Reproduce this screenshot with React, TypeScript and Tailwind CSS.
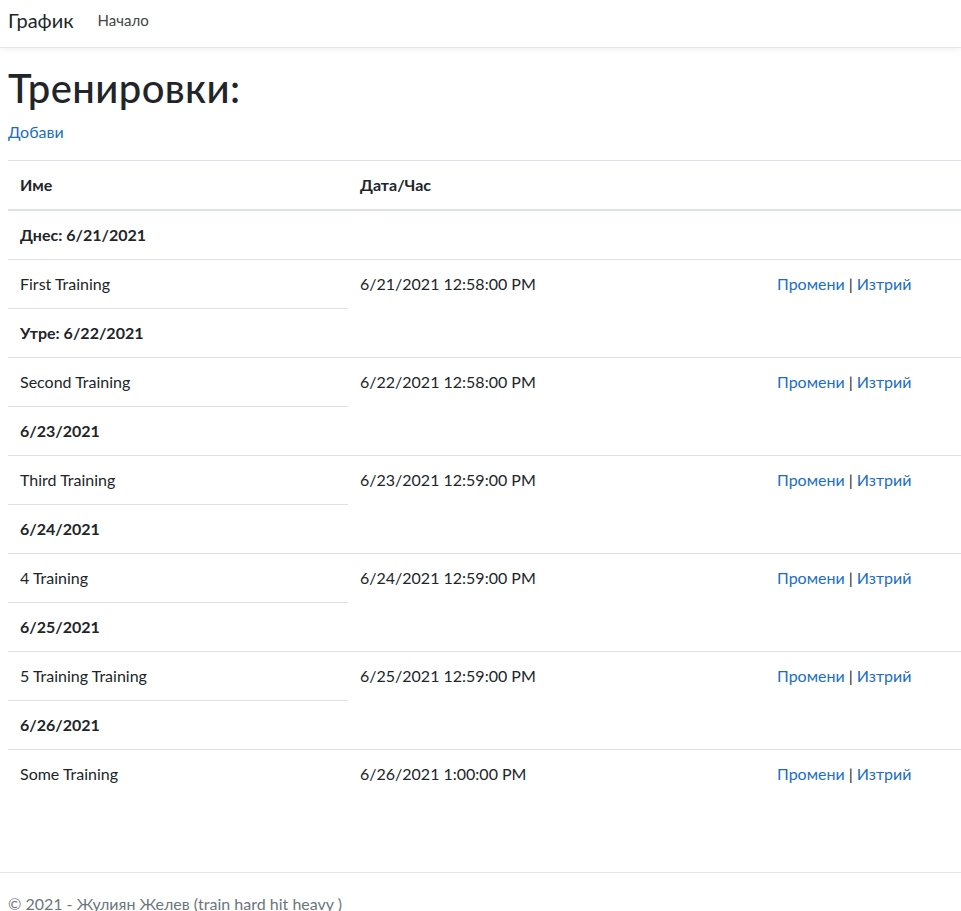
import React from "react";

type Training = { group: string; name: string; date: string };

const TRAININGS: Training[] = [
  { group: "Днес: 6/21/2021", name: "First Training", date: "6/21/2021 12:58:00 PM" },
  { group: "Утре: 6/22/2021", name: "Second Training", date: "6/22/2021 12:58:00 PM" },
  { group: "6/23/2021", name: "Third Training", date: "6/23/2021 12:59:00 PM" },
  { group: "6/24/2021", name: "4 Training", date: "6/24/2021 12:59:00 PM" },
  { group: "6/25/2021", name: "5 Training Training", date: "6/25/2021 12:59:00 PM" },
  { group: "6/26/2021", name: "Some Training", date: "6/26/2021 1:00:00 PM" },
];

const cell = "px-3 py-3 align-top border-t border-[#dee2e6]";

export default function App() {
  return (
    <div
      className="h-[911px] bg-white text-[#212529] text-base leading-6 overflow-hidden"
      style={{ fontFamily: "Lato, 'Noto Sans', sans-serif" }}
    >
      {/* Navbar */}
      <nav className="h-[48px] flex items-start gap-6 px-2 pt-[5px] border-b border-[#e5e5e5] shadow-[0_2px_6px_rgba(0,0,0,0.05)]">
        <span className="text-xl leading-[30px] text-[#212529]">График</span>
        <span className="text-[15px] leading-[30px] text-[#444]">Начало</span>
      </nav>

      {/* Main */}
      <main className="px-2 pt-4">
        <h1 className="text-[40px] font-medium leading-[48px] mb-2 tracking-[0.4px]">Тренировки:</h1>
        <p className="mb-4">
          <a className="text-[#1b6ec2]">Добави</a>
        </p>

        <table className="w-[953px] border-collapse">
          <colgroup>
            <col className="w-[340px]" />
            <col className="w-[417px]" />
            <col />
          </colgroup>
          <thead>
            <tr>
              <th className="px-3 py-3 text-left font-bold border-t border-b-2 border-[#dee2e6]">Име</th>
              <th className="px-3 py-3 text-left font-bold border-t border-b-2 border-[#dee2e6]">Дата/Час</th>
              <th className="px-3 py-3 border-t border-b-2 border-[#dee2e6]"></th>
            </tr>
          </thead>
          <tbody>
            <tr>
              <td colSpan={3} className={`${cell} font-bold`}>
                {TRAININGS[0].group}
              </td>
            </tr>
            {TRAININGS.map((t, i) => {
              const next = TRAININGS[i + 1];
              return (
                <React.Fragment key={t.name}>
                  <tr>
                    <td className={cell}>{t.name}</td>
                    <td rowSpan={next ? 2 : 1} className={cell}>
                      {t.date}
                    </td>
                    <td rowSpan={next ? 2 : 1} className={cell}>
                      <a className="text-[#1b6ec2]">Промени</a> |{" "}
                      <a className="text-[#1b6ec2]">Изтрий</a>
                    </td>
                  </tr>
                  {next && (
                    <tr>
                      <td className={`${cell} font-bold`}>{next.group}</td>
                    </tr>
                  )}
                </React.Fragment>
              );
            })}
          </tbody>
        </table>
      </main>

      {/* Footer */}
      <footer className="mt-[74px] border-t border-[#e5e5e5] px-2 pt-[19px] text-[#6c757d] leading-6">
        © 2021 - Жулиян Желев (train hard hit heavy )
      </footer>
    </div>
  );
}
